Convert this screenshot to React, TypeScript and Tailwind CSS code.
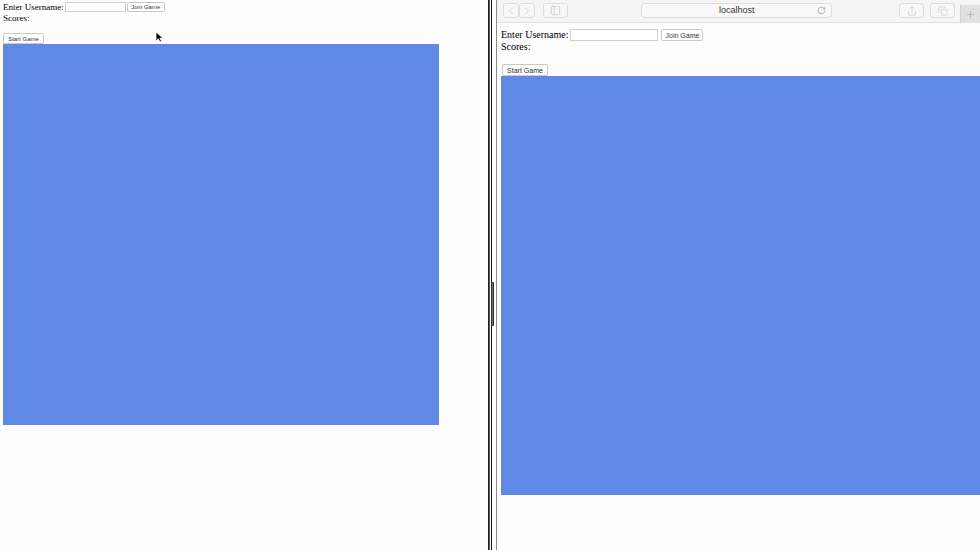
import { ChevronLeft, ChevronRight, PanelLeft, RotateCw, Share, Copy, Plus } from "lucide-react";

const serif = "font-['Liberation_Serif','Times_New_Roman',serif]";
const sans = "font-['Liberation_Sans',Arial,sans-serif]";

const LeftPane = () => (
  <div className={`w-[488px] shrink-0 h-full bg-[#fdfdfd] relative pl-[3px] pt-[2px] text-black ${serif}`}>
    <div className="flex items-center h-[10px] text-[9px] leading-none">
      <span>Enter Username:</span>
      <div className="ml-[1px] w-[61px] h-[10px] bg-white border border-[#cfcfcf]" />
      <button className={`ml-[1px] w-[38px] h-[10px] bg-white border border-[#c9c9c9] rounded-[2px] text-[6px] leading-none ${sans} text-[#333]`}>
        Join Game
      </button>
    </div>
    <div className="h-[11px] text-[9px] leading-[12px]">Scores:</div>
    <div className="h-[10px]" />
    <button className={`block w-[41px] h-[11px] bg-white border border-[#c9c9c9] rounded-[2px] text-[6px] leading-none ${sans} text-[#333]`}>
      Start Game
    </button>
    <div className="w-[436px] h-[381px] bg-[#5f89e5]" />
    <svg className="absolute left-[155px] top-[31px]" width="9" height="12" viewBox="0 0 9 12">
      <path d="M1 1 L1 10 L3.3 7.8 L5 11 L6.5 10.3 L4.9 7.2 L8 7.2 Z" fill="#000" stroke="#fff" strokeWidth="0.8" />
    </svg>
  </div>
);

const Divider = () => (
  <div className="w-[9px] shrink-0 h-full flex relative bg-white">
    <div className="w-[1px] h-full bg-[#222]" />
    <div className="w-[1px] h-full bg-[#555]" />
    <div className="w-[1px] h-full bg-white" />
    <div className="w-[1px] h-full bg-[#111]" />
    <div className="w-[4px] h-full bg-white" />
    <div className="w-[1px] h-full bg-[#8a8a8a]" />
    <div className="absolute left-[3px] top-[282px] w-[3px] h-[44px] bg-[#6b6b6b] border border-[#333] rounded-[1px]" />
  </div>
);

const ToolBtn = ({ children, w }: { children: React.ReactNode; w: string }) => (
  <div className={`${w} h-[15px] border border-[#dcdcdc] rounded-[3px] bg-[#f8f8f8] flex items-center justify-center text-[#c4c4c4]`}>
    {children}
  </div>
);

const RightPane = () => (
  <div className="flex-1 h-full bg-[#fdfdfd] flex flex-col overflow-hidden">
    <div className="h-[23px] shrink-0 bg-[#f5f5f5] border-b border-[#dedede] flex items-start pt-[3px] relative">
      <div className="ml-[6px] flex">
        <ToolBtn w="w-[16px]"><ChevronLeft size={12} strokeWidth={1.5} /></ToolBtn>
        <ToolBtn w="w-[16px]"><ChevronRight size={12} strokeWidth={1.5} /></ToolBtn>
      </div>
      <div className="ml-[8px]">
        <ToolBtn w="w-[25px]"><PanelLeft size={11} strokeWidth={1.5} /></ToolBtn>
      </div>
      <div className={`ml-[73px] w-[195px] h-[15px] rounded-[4px] border border-[#dddddd] bg-[#f9f9f9] flex items-center justify-center relative text-[9px] text-[#333] ${sans}`}>
        localhost
        <RotateCw size={9} strokeWidth={1.5} className="absolute right-[5px] text-[#888]" />
      </div>
      <div className="ml-[67px] flex gap-[6px]">
        <ToolBtn w="w-[25px]"><Share size={10} strokeWidth={1.5} /></ToolBtn>
        <ToolBtn w="w-[25px]"><Copy size={10} strokeWidth={1.5} /></ToolBtn>
      </div>
      <div className="ml-[5px] mt-[2px] w-[20px] h-[18px] bg-[#e0e0e0] border-l border-[#d0d0d0] flex items-center justify-center text-[#a8a8a8]">
        <Plus size={11} strokeWidth={1.5} />
      </div>
    </div>
    <div className={`pl-[4px] pt-[6px] text-black ${serif}`}>
      <div className="flex items-center h-[12px] text-[10px] leading-none">
        <span>Enter Username:</span>
        <div className="ml-[2px] w-[88px] h-[12px] bg-white border border-[#cfcfcf]" />
        <button className={`ml-[3px] w-[42px] h-[12px] bg-white border border-[#c9c9c9] rounded-[2px] text-[7px] leading-none ${sans} text-[#333]`}>
          Join Game
        </button>
      </div>
      <div className="h-[12px] text-[10px] leading-[12px]">Scores:</div>
      <div className="h-[11px]" />
      <button className={`block ml-[1px] w-[46px] h-[12px] bg-white border border-[#c9c9c9] rounded-[2px] text-[7px] leading-none ${sans} text-[#333]`}>
        Start Game
      </button>
      <div className="w-[480px] h-[419px] bg-[#5f89e5]" />
    </div>
  </div>
);

export default function App() {
  return (
    <div className="w-[980px] h-[550px] flex bg-white overflow-hidden">
      <LeftPane />
      <Divider />
      <RightPane />
    </div>
  );
}
